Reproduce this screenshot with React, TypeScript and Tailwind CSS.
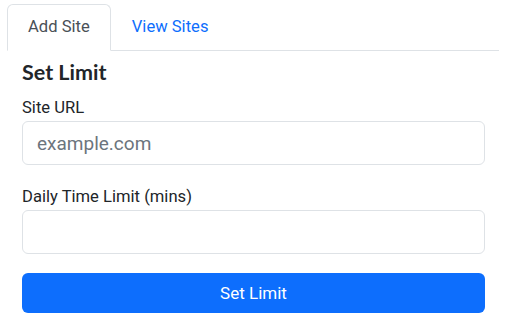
import React from "react";

export default function App() {
  return (
    <div className="w-[512px] h-[320px] bg-white pt-[4px] pl-[7px] pr-[13px]" style={{ fontFamily: "Roboto, 'Liberation Sans', sans-serif" }}>
      <div className="flex border-b border-[#dee2e6]">
        <div className="-mb-px pl-[20px] pr-[20px] py-[10px] border border-[#dee2e6] border-b-white rounded-t-[6px] bg-white text-[16.6px] leading-[24px] text-[#495057]">
          Add Site
        </div>
        <div className="px-[20px] py-[10px] border border-transparent text-[16.6px] leading-[24px] text-[#0d6efd]">
          View Sites
        </div>
      </div>
      <div className="pl-[15px] w-[478px]">
        <h4 className="mt-[8px] text-[21.5px] leading-[26px] font-bold text-[#212529]" style={{ fontFamily: "Lato, 'Open Sans', sans-serif" }}>
          Set Limit
        </h4>
        <div className="mt-[11px] text-[16.6px] leading-[24px] text-[#212529] mb-px">Site URL</div>
        <input
          className="block w-full h-[44px] border border-[#dee2e6] rounded-[6px] px-[14px] text-[19px] text-[#212529] placeholder:text-[#6c757d] outline-none"
          placeholder="example.com"
        />
        <div className="mt-[20px] text-[16.6px] leading-[24px] text-[#212529] mb-px">Daily Time Limit (mins)</div>
        <input className="block w-full h-[44px] border border-[#dee2e6] rounded-[6px] px-[14px] text-[19px] text-[#212529] outline-none" />
        <button className="mt-[19px] w-full h-[40px] rounded-[6px] bg-[#0d6efd] text-white text-[17px] leading-[26px]">
          Set Limit
        </button>
      </div>
    </div>
  );
}
